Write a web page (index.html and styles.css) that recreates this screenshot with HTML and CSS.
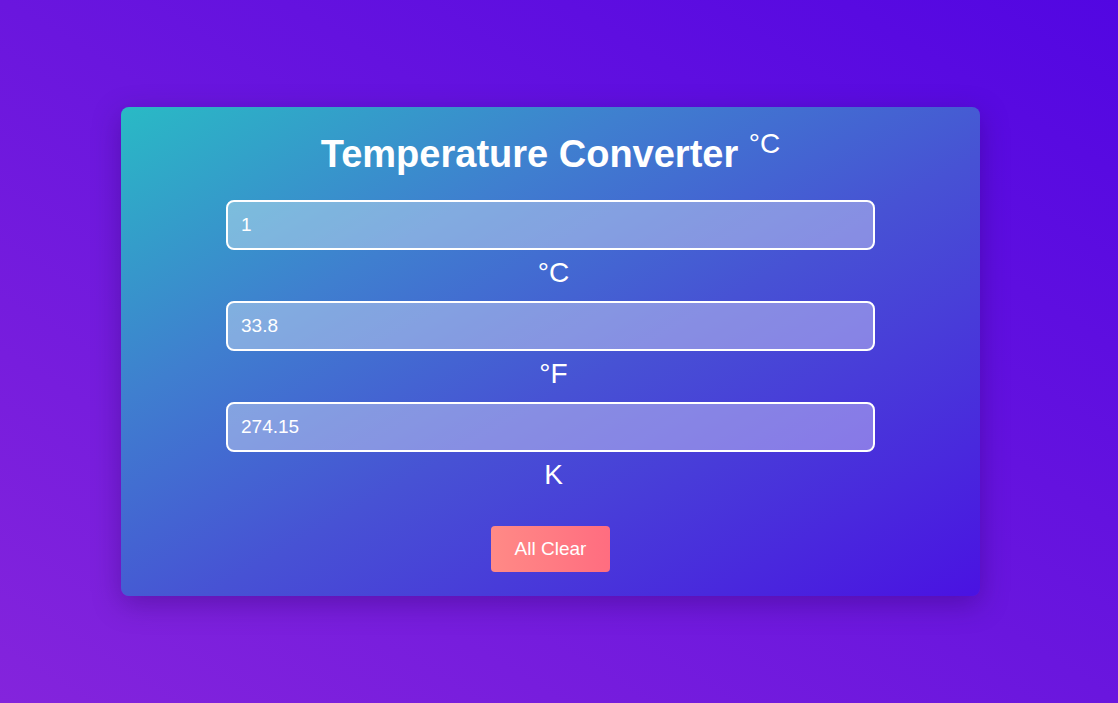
FILE: index.html
```html
<!DOCTYPE html>
<html lang="en">
<head>
<meta charset="utf-8">
<title>Temperature Converter</title>
<link rel="stylesheet" href="styles.css">
</head>
<body>
<main class="page">
  <section class="card">
    <h1 class="title">Temperature Converter <sup class="title-unit">°C</sup></h1>
    <div class="fields">
      <div class="field">
        <input class="field-input" type="text" value="1">
        <div class="field-label">°C</div>
      </div>
      <div class="field">
        <input class="field-input" type="text" value="33.8">
        <div class="field-label">°F</div>
      </div>
      <div class="field">
        <input class="field-input" type="text" value="274.15">
        <div class="field-label">K</div>
      </div>
    </div>
    <button class="clear-btn" type="button">All Clear</button>
  </section>
</main>
</body>
</html>
```

FILE: styles.css
```css
* { box-sizing: border-box; }

html, body {
  margin: 0;
  height: 100%;
}

body {
  font-family: "Liberation Sans", Arial, sans-serif;
  color: #fff;
  background: linear-gradient(to top right, #8424dc 0%, #6a16de 50%, #5206e2 100%);
}

.page {
  height: 100%;
  display: flex;
  align-items: center;
  justify-content: center;
  padding-right: 17px;
}

.card {
  width: 859px;
  height: 489px;
  border-radius: 8px;
  padding: 25px 0 24px;
  display: flex;
  flex-direction: column;
  align-items: center;
  background: linear-gradient(to bottom right, #29bac5 0%, #3f7fcf 30%, #4752d4 55%, #4a12e2 100%);
  box-shadow: 0 8px 28px rgba(40, 0, 90, 0.35);
}

.title {
  margin: 0;
  font-size: 38px;
  line-height: 44px;
  font-weight: 700;
  text-align: center;
}

.title-unit {
  font-size: 28px;
  font-weight: 400;
  line-height: 0;
  vertical-align: 14px;
}

.fields {
  margin-top: 24px;
  width: 649px;
  display: flex;
  flex-direction: column;
}

.field {
  display: flex;
  flex-direction: column;
  align-items: center;
  margin-bottom: 11px;
}

.field:last-child { margin-bottom: 0; }

.field-input {
  width: 100%;
  height: 50px;
  border: 2px solid #fff;
  border-radius: 8px;
  background: rgba(255, 255, 255, 0.35);
  color: #fff;
  font-family: inherit;
  font-size: 19px;
  padding: 0 13px;
  outline: none;
}

.field-label {
  margin-top: 6px;
  font-size: 28px;
  line-height: 34px;
  padding-left: 6px;
}

.clear-btn {
  margin-top: 34px;
  width: 119px;
  height: 46px;
  border: none;
  border-radius: 4px;
  background: linear-gradient(to right, #ff8a86, #ff6d80);
  color: #fff;
  font-family: inherit;
  font-size: 19px;
  cursor: pointer;
}
```
